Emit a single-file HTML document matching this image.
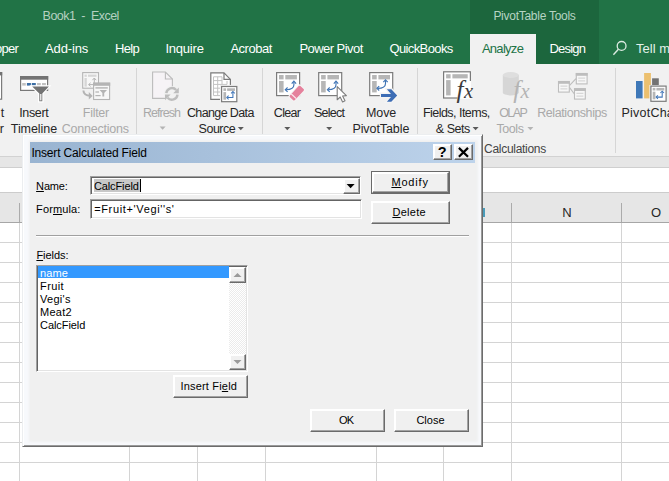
<!DOCTYPE html>
<html><head><meta charset="utf-8"><title>Excel - Insert Calculated Field</title>
<style>
html,body{margin:0;padding:0;background:#fff;}
#root{position:relative;width:669px;height:481px;overflow:hidden;background:#fff;font-family:"Liberation Sans",sans-serif;}
#root div, #root svg{position:absolute;}
.t{position:absolute;white-space:pre;line-height:16px;height:16px;font-family:"Liberation Sans",sans-serif;}
.t u{text-decoration:underline;text-underline-offset:0.5px;text-decoration-thickness:1px;}
.sep{width:1px;background:#d6d6d6;top:68px;height:85px;}
.btn{background:#f0f0f0;box-sizing:border-box;border:1px solid;border-color:#ffffff #6b6b6b #6b6b6b #ffffff;box-shadow:inset -1px -1px 0 #a3a3a3, inset 1px 1px 0 #ffffff;}
.vl{width:1px;background:#d4d4d4;top:223px;height:258px;}
.hl{height:1px;background:#d4d4d4;left:0;width:669px;}

</style></head><body>
<div id="root">
<!-- title + tabs -->
<div style="left:0;top:0;width:669px;height:63.6px;background:#217346"></div>
<div style="left:470px;top:0;width:129px;height:63.6px;background:#1c663d"></div>
<div style="left:470px;top:34px;width:66px;height:30px;background:#f1f1f1"></div>
<!-- ribbon -->
<div style="left:0;top:63.6px;width:669px;height:92.4px;background:#f1f1f1"></div>
<div style="left:0;top:156px;width:669px;height:1px;background:#d2d2d2"></div>
<div style="left:0;top:157px;width:669px;height:10px;background:#e6e6e6"></div>
<div style="left:0;top:167px;width:669px;height:1px;background:#cfcfcf"></div>
<div style="left:0;top:168px;width:669px;height:24px;background:#ffffff"></div>
<div style="left:0;top:192px;width:669px;height:1px;background:#cccccc"></div>
<div style="left:0;top:193px;width:669px;height:29px;background:#e6e6e6"></div>
<div style="left:0;top:222px;width:669px;height:1px;background:#a6a6a6"></div>
<!-- ribbon separators -->
<div class="sep" style="left:136px"></div>
<div class="sep" style="left:262px"></div>
<div class="sep" style="left:417px"></div>
<div class="sep" style="left:615px"></div>
<!-- search icon -->
<svg style="left:608px;top:38px" width="22" height="22" viewBox="0 0 22 22"><circle cx="13.6" cy="7.9" r="4.4" fill="none" stroke="#dcebe2" stroke-width="1.3"/><path d="M10.4 11.2 L5.4 16.8" stroke="#dcebe2" stroke-width="1.4" fill="none"/></svg>
<!-- column header separators -->
<div style="left:19px;top:203px;width:1px;height:19px;background:#ababab"></div>
<div style="left:511px;top:203px;width:1px;height:19px;background:#ababab"></div>
<div style="left:621px;top:203px;width:1px;height:19px;background:#ababab"></div>
<div style="left:483px;top:207.5px;width:1.5px;height:9px;background:#4a9cba"></div>
<!-- grid -->
<div class="vl" style="left:19px"></div>
<div class="vl" style="left:129px"></div>
<div class="vl" style="left:197px"></div>
<div class="vl" style="left:265px"></div>
<div class="vl" style="left:376px"></div>
<div class="vl" style="left:443px"></div>
<div class="vl" style="left:511px"></div>
<div class="vl" style="left:621px"></div>
<div class="hl" style="top:242px"></div>
<div class="hl" style="top:262px"></div>
<div class="hl" style="top:282px"></div>
<div class="hl" style="top:302px"></div>
<div class="hl" style="top:322px"></div>
<div class="hl" style="top:342px"></div>
<div class="hl" style="top:362px"></div>
<div class="hl" style="top:382px"></div>
<div class="hl" style="top:402px"></div>
<div class="hl" style="top:422px"></div>
<div class="hl" style="top:442px"></div>
<div class="hl" style="top:462px"></div>
<!-- ICONS -->
<!--ICONS_START-->
<svg style="left:0;top:0" width="669" height="160" viewBox="0 0 669 160">
<!-- Insert slicer partial -->
<rect x="-3" y="72.6" width="4.6" height="26.6" fill="#fff" stroke="#7c7c7c" stroke-width="1.2"/>
<rect x="-3" y="72" width="5.2" height="3.4" fill="#737373"/>
<!-- Insert Timeline -->
<rect x="20.6" y="76.6" width="27" height="13.8" fill="#fff" stroke="#787878" stroke-width="1.2"/>
<rect x="20" y="76" width="28.2" height="3.7" fill="#737373"/>
<rect x="22.2" y="83" width="3.6" height="2.6" fill="#c2c2c2"/>
<rect x="26.9" y="83" width="4" height="2.6" fill="#3b6ea5"/>
<rect x="31.8" y="83" width="4" height="2.6" fill="#3b6ea5"/>
<rect x="37" y="83" width="3.8" height="2.6" fill="#c2c2c2"/>
<rect x="42" y="83" width="3.9" height="2.6" fill="#c2c2c2"/>
<path d="M31.3 86 H49.6 L42.7 93.6 V101.6 H38.8 V93.6 Z" fill="#fff" stroke="#fff" stroke-width="1.6"/>
<path d="M32.2 86.4 H48.9 L42.3 93.4 V101.2 H39.3 V93.4 Z" fill="#737373"/>
<rect x="40.2" y="94" width="1.2" height="6.4" fill="#fff"/>
<!-- Filter Connections (disabled) -->
<g stroke="#b4b4b4" fill="none" stroke-width="1.1">
<rect x="82.7" y="72.6" width="15.8" height="15.6" fill="#f7f7f7"/>
<rect x="93.6" y="83.2" width="16" height="16.3" fill="#f7f7f7"/>
<path d="M83.4 90.5 Q83.6 95.6 90.6 95.8" stroke-width="2"/>
<path d="M94.3 78.2 V84 M92.4 80.2 L94.3 78 L96.2 80.2 M88.8 84.6 H93 M90.6 82.8 L88.6 84.6 L90.6 86.4" stroke-width="1"/>
</g>
<g fill="#b4b4b4">
<rect x="93" y="82.6" width="17.2" height="3.2"/>
<path d="M88.8 92 L92.6 95.9 L88.8 99.6 Z"/>
<rect x="95.4" y="87.2" width="12.4" height="1.4"/>
<path d="M99.6 90 H107 L104.2 93 V96.6 H102.4 V93 Z"/>
<rect x="95.4" y="91.4" width="3.6" height="1.2"/>
<rect x="95.4" y="95" width="5.2" height="1.2"/>
</g>
<g fill="#d6d6d6">
<rect x="84.5" y="74.6" width="2.3" height="2.2"/>
<rect x="88" y="74.6" width="8.5" height="2.2"/>
<rect x="84.5" y="78" width="2.3" height="8.6"/>
</g>
<!-- Refresh (disabled) -->
<path d="M152.6 72 H165.4 L172.4 79 V98.4 H152.6 Z" fill="#f6f3f6" stroke="#bcbcbc" stroke-width="1.1"/>
<path d="M165.4 72 V79 H172.4" fill="none" stroke="#bcbcbc" stroke-width="1.1"/>
<circle cx="171.9" cy="93.9" r="8" fill="#f1f1f1"/>
<g fill="none" stroke="#bdbdbd" stroke-width="2.4">
<path d="M166.3 93.2 A5.7 5.7 0 0 1 176.2 90"/>
<path d="M177.5 94.6 A5.7 5.7 0 0 1 167.6 97.8"/>
</g>
<path d="M178.8 87.6 V93.2 H173.2 Z" fill="#bdbdbd"/>
<path d="M165 100.2 V94.6 H170.6 Z" fill="#bdbdbd"/>
<!-- Change data source -->
<path d="M210.8 72.9 H224 L230.4 79.4 V99.4 H210.8 Z" fill="#fff" stroke="#7a7a7a" stroke-width="1.2"/>
<path d="M224 72.9 V79.4 H230.4" fill="none" stroke="#7a7a7a" stroke-width="1.2"/>
<g stroke="#c2c2c2" stroke-width="1" fill="none">
<path d="M213.5 76.8 H222 M213.5 80.6 H222 M213.5 84.4 H227 M213.5 88.2 H222 M213.5 92 H222 M213.5 95.6 H222"/>
<path d="M213.5 76.8 V95.6 M217.7 76.8 V95.6 M222 76.8 V95.6 M227 81 V84.4"/>
</g>
<rect x="220" y="84.9" width="18" height="18" fill="#f1f1f1"/>
<g transform="translate(221 85.9)"><g>
  <rect x="0.6" y="0.6" width="15.2" height="15.2" fill="#fff" stroke="#7c7c7c" stroke-width="1.2"/>
  <rect x="2.4" y="2.4" width="2.7" height="2.6" fill="#b6b6b6"/>
  <rect x="6.1" y="2.4" width="7.9" height="2.6" fill="#b6b6b6"/>
  <rect x="2.4" y="6.2" width="2.7" height="7.6" fill="#b6b6b6"/>
  <path d="M11.9 6.2 V11.6 H6.2" fill="none" stroke="#4176b8" stroke-width="1.05"/>
  <path d="M10.1 7.5 L11.9 5.7 L13.7 7.5" fill="none" stroke="#4176b8" stroke-width="1.05"/>
  <path d="M7.6 9.8 L5.8 11.6 L7.6 13.4" fill="none" stroke="#4176b8" stroke-width="1.05"/>
</g></g>
<!-- Clear -->
<g transform="translate(276 72)"><g><g>
  <rect x="0.6" y="0.6" width="23" height="23" fill="#fff" stroke="#7c7c7c" stroke-width="1.2"/>
  <rect x="3" y="3" width="4.6" height="4.4" fill="#b6b6b6"/>
  <rect x="9.3" y="3" width="11.6" height="4.4" fill="#b6b6b6"/>
  <rect x="3" y="9" width="4.6" height="11.4" fill="#b6b6b6"/>
</g><g fill="none" stroke="#3f74b5" stroke-width="1.15">
  <path d="M17.9 10 V12.8 Q17.9 17.7 10 17.7"/>
  <path d="M15.7 11.6 L17.9 9.2 L20.1 11.6"/>
  <path d="M11.6 15.5 L9.3 17.7 L11.6 19.9"/>
</g></g></g>
<g transform="translate(296.8 93.1) rotate(-47)">
<rect x="-8.6" y="-4.4" width="17.2" height="8.8" rx="1.6" fill="#f4f4f4"/>
<rect x="-7.6" y="-3.4" width="15.2" height="6.8" rx="1.2" fill="#e5819c"/>
<rect x="-5" y="-3.4" width="1.2" height="6.8" fill="#fbe9ee"/>
</g>
<!-- Select -->
<g transform="translate(318.1 72)"><g><g>
  <rect x="0.6" y="0.6" width="23" height="23" fill="#fff" stroke="#7c7c7c" stroke-width="1.2"/>
  <rect x="3" y="3" width="4.6" height="4.4" fill="#b6b6b6"/>
  <rect x="9.3" y="3" width="11.6" height="4.4" fill="#b6b6b6"/>
  <rect x="3" y="9" width="4.6" height="11.4" fill="#b6b6b6"/>
</g><g fill="none" stroke="#3f74b5" stroke-width="1.15">
  <path d="M17.9 10 V12.8 Q17.9 17.7 10 17.7"/>
  <path d="M15.7 11.6 L17.9 9.2 L20.1 11.6"/>
  <path d="M11.6 15.5 L9.3 17.7 L11.6 19.9"/>
</g></g></g>
<path d="M337.2 86.6 V99.8 L340.2 97 L342.6 102 L345 100.8 L342.6 96 L346.4 95.6 Z" fill="#fff" stroke="#7d7d7d" stroke-width="1.1" stroke-linejoin="round"/>
<!-- Move -->
<g transform="translate(369.1 72)"><g>
  <rect x="0.6" y="0.6" width="23" height="23" fill="#fff" stroke="#7c7c7c" stroke-width="1.2"/>
  <rect x="3" y="3" width="4.6" height="4.4" fill="#b6b6b6"/>
  <rect x="9.3" y="3" width="11.6" height="4.4" fill="#b6b6b6"/>
  <rect x="3" y="9" width="4.6" height="11.4" fill="#b6b6b6"/>
</g></g><g transform="translate(367.6 70.6)"><g fill="none" stroke="#3f74b5" stroke-width="1.15">
  <path d="M17.9 10 V12.8 Q17.9 17.7 10 17.7"/>
  <path d="M15.7 11.6 L17.9 9.2 L20.1 11.6"/>
  <path d="M11.6 15.5 L9.3 17.7 L11.6 19.9"/>
</g></g>
<path d="M380.6 93.4 H390 L386 88.8 H391.6 L397.8 95.5 L391.6 102.2 H386 L390 97.6 H380.6 Z" fill="#f4f4f4" stroke="#f4f4f4" stroke-width="1.6"/>
<path d="M381 93.9 H391 L386.9 89.3 H391.3 L397.2 95.5 L391.3 101.7 H386.9 L391 97.1 H381 Z" fill="#3d6db5"/>
<!-- Fields Items Sets -->
<rect x="443.6" y="71.8" width="26.8" height="26.2" fill="#fff" stroke="#7a7a7a" stroke-width="1.2"/>
<rect x="446.1" y="74.2" width="4.5" height="4.2" fill="#b6b6b6"/>
<rect x="452.4" y="74.2" width="15.3" height="4.2" fill="#b6b6b6"/>
<rect x="446.1" y="80.1" width="4.5" height="15.3" fill="#b6b6b6"/>
<rect x="457.5" y="81" width="16" height="21" fill="#fff"/>
<rect x="471" y="81" width="3" height="21" fill="#f1f1f1"/>
<rect x="457.5" y="98.7" width="16" height="4" fill="#f1f1f1"/>
<text font-family="Liberation Serif, serif" font-style="italic" fill="#3c3c3c"><tspan x="456.6" y="97.5" font-size="25">f</tspan><tspan x="463.9" y="98.4" font-size="20.5">x</tspan></text>
<!-- OLAP -->
<path d="M502.8 75 V92.4 A8 3 0 0 0 518.8 92.4 V75 Z" fill="#d6d6d6"/>
<ellipse cx="510.8" cy="75" rx="8" ry="3" fill="#dedede"/>
<text font-family="Liberation Serif, serif" font-style="italic" fill="#b4b4b4"><tspan x="513.2" y="97.5" font-size="25">f</tspan><tspan x="520.5" y="98.4" font-size="20.5">x</tspan></text>
<!-- Relationships -->
<g stroke="#bdbdbd" stroke-width="1.1" fill="#f7f7f7">
<path d="M569.6 85.4 L576 78.6 M569.6 87.6 L574.4 94" fill="none"/>
<rect x="558.5" y="81.5" width="10.8" height="10.6"/>
<rect x="576.3" y="73.5" width="10.8" height="10.4"/>
<rect x="574.5" y="88.7" width="10.8" height="10.4"/>
</g>
<g fill="#bdbdbd">
<rect x="558" y="81" width="11.8" height="2.8"/>
<rect x="575.8" y="73" width="11.8" height="2.8"/>
<rect x="574" y="88.2" width="11.8" height="2.8"/>
</g>
<g fill="#cfcfcf">
<rect x="560.4" y="85.6" width="7" height="1"/><rect x="560.4" y="88.4" width="7" height="1"/>
<rect x="578.2" y="77.6" width="7" height="1"/><rect x="578.2" y="80.4" width="7" height="1"/>
<rect x="576.4" y="92.8" width="7" height="1"/><rect x="576.4" y="95.6" width="7" height="1"/>
</g>
<!-- PivotChart -->
<rect x="636" y="81" width="6.6" height="17.4" fill="#3f78b8"/>
<rect x="644.1" y="73" width="6.8" height="25.4" fill="#ecc06f"/>
<rect x="652.1" y="78.3" width="6.7" height="20" fill="#737373"/>
<rect x="649.4" y="85" width="17.6" height="16.8" fill="#f1f1f1"/>
<g transform="translate(650.3 85.5)"><g>
  <rect x="0.6" y="0.6" width="15.2" height="15.2" fill="#fff" stroke="#7c7c7c" stroke-width="1.2"/>
  <rect x="2.4" y="2.4" width="2.7" height="2.6" fill="#b6b6b6"/>
  <rect x="6.1" y="2.4" width="7.9" height="2.6" fill="#b6b6b6"/>
  <rect x="2.4" y="6.2" width="2.7" height="7.6" fill="#b6b6b6"/>
  <path d="M11.9 6.2 V11.6 H6.2" fill="none" stroke="#4176b8" stroke-width="1.05"/>
  <path d="M10.1 7.5 L11.9 5.7 L13.7 7.5" fill="none" stroke="#4176b8" stroke-width="1.05"/>
  <path d="M7.6 9.8 L5.8 11.6 L7.6 13.4" fill="none" stroke="#4176b8" stroke-width="1.05"/>
</g></g>
</svg>
<!--ICONS_END-->
<!-- dropdown arrows -->
<svg style="left:0;top:0" width="669" height="160" viewBox="0 0 669 160">
<g fill="#b4b4b4"><path d="M159.6 126.6 h6 l-3 3.2z"/><path d="M527.4 127 h6 l-3 3.2z"/></g>
<g fill="#5a5a5a"><path d="M237.8 127 h6 l-3 3.2z"/><path d="M284.3 127 h6 l-3 3.2z"/><path d="M326.2 127 h6 l-3 3.2z"/><path d="M472.6 127 h6 l-3 3.2z"/></g>
</svg>
<!-- DIALOG -->
<div style="left:22.4px;top:134px;width:460.6px;height:312.6px;background:#f7f9fc;box-sizing:border-box;border:1px solid;border-color:#eceef0 #6c6c6c #6c6c6c #eceef0;box-shadow:inset 1px 1px 0 #fff, inset -1px -1px 0 #9a9a9a"></div>
<div style="left:30px;top:141px;width:446px;height:299px;background:#f0f0f0;box-shadow:0 0 2.5px 1.5px #f0f0f0"></div>
<div style="left:30px;top:142px;width:445px;height:21px;background:linear-gradient(to right,#99b4d1,#bdd3eb)"></div>
<!-- title buttons -->
<div class="btn" style="left:433px;top:144px;width:19px;height:16px"></div>
<div class="btn" style="left:454px;top:144px;width:19px;height:16px"></div>
<svg style="left:433px;top:144px" width="40" height="16" viewBox="0 0 40 16"><path d="M25.9 3.9 L35 12.8 M35 3.9 L25.9 12.8" stroke="#000" stroke-width="2.2" fill="none"/></svg>
<span class="t" style="left:437.8px;top:144.3px;font-size:14.5px;font-weight:bold;color:#000">?</span>
<!-- name combo -->
<div style="left:90px;top:176px;width:271px;height:19px;background:#fff;box-sizing:border-box;border:1px solid;border-color:#a0a0a0 #ffffff #ffffff #a0a0a0;box-shadow:inset 1px 1px 0 #646464, inset -1px -1px 0 #e3e3e3"></div>
<div style="left:93.6px;top:178.7px;width:46px;height:13px;background:#c8c8c8"></div>
<div style="left:139.7px;top:179px;width:1px;height:13px;background:#000"></div>
<div class="btn" style="left:343px;top:178px;width:17px;height:16px"></div>
<svg style="left:343px;top:178px" width="17" height="16" viewBox="0 0 17 16"><path d="M3.6 6 h8 l-4 4.2z" fill="#000"/></svg>
<!-- formula input -->
<div style="left:90px;top:199px;width:272px;height:19.5px;background:#fff;box-sizing:border-box;border:1px solid;border-color:#a0a0a0 #ffffff #ffffff #a0a0a0;box-shadow:inset 1px 1px 0 #646464, inset -1px -1px 0 #e3e3e3"></div>
<!-- Modify (default) + Delete -->
<div style="left:371px;top:171px;width:79px;height:23px;background:#6a6a6a"></div>
<div class="btn" style="left:372px;top:172px;width:77px;height:21px"></div>
<div class="btn" style="left:371px;top:201px;width:79px;height:23px"></div>
<!-- separator -->
<div style="left:36px;top:235px;width:433px;height:1px;background:#a0a0a0"></div>
<div style="left:36px;top:236px;width:433px;height:1px;background:#ffffff"></div>
<!-- listbox -->
<div style="left:36px;top:264.5px;width:212px;height:107px;background:#fff;box-sizing:border-box;border:1px solid;border-color:#a0a0a0 #ffffff #ffffff #a0a0a0;box-shadow:inset 1px 1px 0 #646464, inset -1px -1px 0 #e3e3e3"></div>
<div style="left:38px;top:266.4px;width:191px;height:12px;background:#3399ff"></div>
<div style="left:229px;top:266.5px;width:17px;height:103px;background:#f6f6f6;background-image:repeating-conic-gradient(#ebebeb 0% 25%, #ffffff 0% 50%);background-size:2px 2px"></div>
<div class="btn" style="left:229px;top:266.5px;width:17px;height:16px"></div>
<div class="btn" style="left:229px;top:353.5px;width:17px;height:16px"></div>
<svg style="left:229px;top:266.5px" width="17" height="103" viewBox="0 0 17 103"><path d="M4.5 10 h8 l-4 -4z" fill="#9a9a9a"/><path d="M4.5 93 h8 l-4 4z" fill="#9a9a9a"/></svg>
<!-- Insert Field -->
<div class="btn" style="left:173px;top:375px;width:75px;height:22.5px"></div>
<!-- OK / Close -->
<div class="btn" style="left:310px;top:409px;width:75px;height:23px"></div>
<div class="btn" style="left:394px;top:409px;width:75px;height:23px"></div>

<span class="t" style="left:42.6px;top:8.0px;font-size:12.5px;color:#b5d1c1;letter-spacing:-0.52px;">Book1&nbsp; -&nbsp; Excel</span>
<span class="t" style="left:493.4px;top:8.0px;font-size:12px;color:#b6d4c3;letter-spacing:-0.27px;">PivotTable Tools</span>
<span class="t" style="left:-5.1px;top:40.5px;font-size:13px;color:#ffffff;letter-spacing:-0.68px;">oper</span>
<span class="t" style="left:45.1px;top:40.5px;font-size:13px;color:#ffffff;letter-spacing:-0.15px;">Add-ins</span>
<span class="t" style="left:115.0px;top:40.5px;font-size:13px;color:#ffffff;letter-spacing:-0.68px;">Help</span>
<span class="t" style="left:165.4px;top:40.5px;font-size:13px;color:#ffffff;letter-spacing:-0.21px;">Inquire</span>
<span class="t" style="left:230.4px;top:40.5px;font-size:13px;color:#ffffff;letter-spacing:-0.47px;">Acrobat</span>
<span class="t" style="left:299.4px;top:40.5px;font-size:13px;color:#ffffff;letter-spacing:-0.54px;">Power Pivot</span>
<span class="t" style="left:389.4px;top:40.5px;font-size:13px;color:#ffffff;letter-spacing:-0.60px;">QuickBooks</span>
<span class="t" style="left:481.9px;top:40.5px;font-size:13px;color:#217346;letter-spacing:-0.71px;">Analyze</span>
<span class="t" style="left:549.4px;top:40.5px;font-size:13px;color:#ffffff;letter-spacing:-0.79px;">Design</span>
<span class="t" style="left:636.0px;top:40.5px;font-size:13px;color:#e4f1ea;letter-spacing:0.04px;">Tell me</span>
<span class="t" style="left:0.8px;top:104.5px;font-size:12.5px;color:#262626;letter-spacing:0.00px;">t</span>
<span class="t" style="left:-0.3px;top:121.0px;font-size:12.5px;color:#262626;letter-spacing:0.00px;">r</span>
<span class="t" style="left:19.2px;top:104.5px;font-size:12.5px;color:#262626;letter-spacing:-0.35px;">Insert</span>
<span class="t" style="left:10.8px;top:121.0px;font-size:12.5px;color:#262626;letter-spacing:-0.07px;">Timeline</span>
<span class="t" style="left:82.8px;top:104.5px;font-size:12.5px;color:#a9a9a9;letter-spacing:-0.28px;">Filter</span>
<span class="t" style="left:61.7px;top:121.0px;font-size:12.5px;color:#a9a9a9;letter-spacing:-0.22px;">Connections</span>
<span class="t" style="left:143.0px;top:104.5px;font-size:12.5px;color:#a9a9a9;letter-spacing:-0.98px;">Refresh</span>
<span class="t" style="left:186.9px;top:104.5px;font-size:12.5px;color:#262626;letter-spacing:-0.62px;">Change Data</span>
<span class="t" style="left:198.6px;top:121.0px;font-size:12.5px;color:#262626;letter-spacing:-0.50px;">Source</span>
<span class="t" style="left:273.8px;top:104.5px;font-size:12.5px;color:#262626;letter-spacing:-0.69px;">Clear</span>
<span class="t" style="left:313.9px;top:104.5px;font-size:12.5px;color:#262626;letter-spacing:-0.75px;">Select</span>
<span class="t" style="left:365.9px;top:104.5px;font-size:12.5px;color:#262626;letter-spacing:-0.06px;">Move</span>
<span class="t" style="left:352.4px;top:121.0px;font-size:12.5px;color:#262626;letter-spacing:-0.08px;">PivotTable</span>
<span class="t" style="left:422.9px;top:104.5px;font-size:12.5px;color:#262626;letter-spacing:-0.53px;">Fields, Items,</span>
<span class="t" style="left:435.7px;top:121.0px;font-size:12.5px;color:#262626;letter-spacing:-0.43px;">&amp; Sets</span>
<span class="t" style="left:499.2px;top:104.5px;font-size:12.5px;color:#a9a9a9;letter-spacing:-1.55px;">OLAP</span>
<span class="t" style="left:496.4px;top:121.0px;font-size:12.5px;color:#a9a9a9;letter-spacing:-0.42px;">Tools</span>
<span class="t" style="left:537.2px;top:104.5px;font-size:12.5px;color:#a9a9a9;letter-spacing:-0.41px;">Relationships</span>
<span class="t" style="left:621.4px;top:104.5px;font-size:12.5px;color:#262626;letter-spacing:0.24px;">PivotChart</span>
<span class="t" style="left:484.1px;top:140.5px;font-size:12px;color:#444444;letter-spacing:-0.30px;">Calculations</span>
<span class="t" style="left:562.2px;top:204.6px;font-size:13px;color:#262626;letter-spacing:0.00px;">N</span>
<span class="t" style="left:651.1px;top:204.6px;font-size:13px;color:#262626;letter-spacing:0.00px;">O</span>
<span class="t" style="left:31.4px;top:145.0px;font-size:12px;color:#000000;letter-spacing:-0.18px;">Insert Calculated Field</span>
<span class="t" style="left:36.1px;top:177.8px;font-size:11px;color:#000000;letter-spacing:-0.16px;"><u>N</u>ame:</span>
<span class="t" style="left:36.1px;top:201.4px;font-size:11px;color:#000000;letter-spacing:0.13px;">For<u>m</u>ula:</span>
<span class="t" style="left:93.9px;top:178.0px;font-size:11px;color:#000000;letter-spacing:-0.11px;">CalcField</span>
<span class="t" style="left:94.2px;top:200.8px;font-size:11px;color:#000000;letter-spacing:0.64px;">=Fruit+'Vegi''s'</span>
<span class="t" style="left:391.4px;top:174.3px;font-size:11px;color:#000000;letter-spacing:0.82px;"><u>M</u>odify</span>
<span class="t" style="left:392.4px;top:204.4px;font-size:11px;color:#000000;letter-spacing:0.28px;"><u>D</u>elete</span>
<span class="t" style="left:36.4px;top:246.9px;font-size:11px;color:#000000;letter-spacing:-0.04px;"><u>F</u>ields:</span>
<span class="t" style="left:40.0px;top:265.0px;font-size:11px;color:#ffffff;letter-spacing:0.12px;">name</span>
<span class="t" style="left:40.0px;top:278.0px;font-size:11px;color:#000000;letter-spacing:0.42px;">Fruit</span>
<span class="t" style="left:40.0px;top:291.0px;font-size:11px;color:#000000;letter-spacing:0.28px;">Vegi's</span>
<span class="t" style="left:40.0px;top:304.0px;font-size:11px;color:#000000;letter-spacing:0.26px;">Meat2</span>
<span class="t" style="left:40.0px;top:317.0px;font-size:11px;color:#000000;letter-spacing:-0.06px;">CalcField</span>
<span class="t" style="left:180.4px;top:378.0px;font-size:11px;color:#000000;letter-spacing:0.19px;">Insert Fi<u>e</u>ld</span>
<span class="t" style="left:339.0px;top:412.3px;font-size:11px;color:#000000;letter-spacing:-0.71px;">OK</span>
<span class="t" style="left:416.4px;top:412.3px;font-size:11px;color:#000000;letter-spacing:0.02px;">Close</span>
</div>
</body></html>
